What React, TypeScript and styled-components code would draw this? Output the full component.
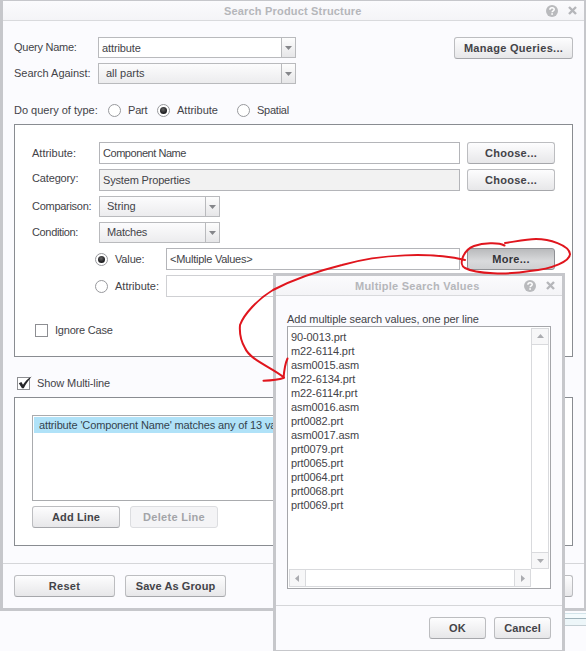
import React from 'react'
import styled, { createGlobalStyle, css } from 'styled-components'

const VALUES = [
  '90-0013.prt',
  'm22-6114.prt',
  'asm0015.asm',
  'm22-6134.prt',
  'm22-6114r.prt',
  'asm0016.asm',
  'prt0082.prt',
  'asm0017.asm',
  'prt0079.prt',
  'prt0065.prt',
  'prt0064.prt',
  'prt0068.prt',
  'prt0069.prt'
]

const GlobalStyle = createGlobalStyle`
  * {
    box-sizing: border-box;
  }
  body {
    margin: 0;
    overflow: hidden;
    background: #fbfbfe;
    color: #434348;
    font: 11px/14px 'Liberation Sans', Arial, sans-serif;
  }
`

const Page = styled.div`
  position: relative;
  width: 586px;
  height: 651px;
  overflow: hidden;
`

const Window = styled.div`
  display: flex;
  flex-direction: column;
  height: 611px;
  border: solid #c6c7cb;
  border-width: 1px 2px 3px 3px;
  background: #fbfbfe;
`

const TitleBar = styled.div`
  display: flex;
  align-items: center;
  flex: none;
  height: 20px;
  padding-right: 7px;
  border-bottom: 1px solid #d9dadd;
  background: linear-gradient(#fbfbfd, #f4f4f7);
  color: #b5b6ba;
`

const Title = styled.div<{ $indent: number; $spacing: number }>`
  flex: 1;
  padding-left: ${({ $indent }) => $indent}px;
  font-weight: bold;
  letter-spacing: ${({ $spacing }) => $spacing}px;
  white-space: nowrap;
`

const TitleIcons = styled.div`
  display: flex;
  align-items: center;
  gap: 10px;
`

const Body = styled.div`
  display: flex;
  flex-direction: column;
  flex: 1;
  padding: 16px 11px 0;
`

const Row = styled.div<{ $height?: number; $top?: number; $left?: number; $align?: string }>`
  display: flex;
  align-items: ${({ $align = 'center' }) => $align};
  flex: none;
  height: ${({ $height = 22 }) => $height}px;
  margin-top: ${({ $top = 0 }) => $top}px;
  padding-left: ${({ $left = 0 }) => $left}px;
`

const Label = styled.div<{ $width?: number; $spacing?: number; $up?: number; $down?: number }>`
  flex: none;
  width: ${({ $width }) => ($width ? `${$width}px` : 'auto')};
  padding-top: ${({ $down = 0 }) => $down}px;
  padding-bottom: ${({ $up = 0 }) => $up}px;
  letter-spacing: ${({ $spacing = 0 }) => $spacing}px;
  white-space: nowrap;
`

const Field = styled.div<{ $width: number; $spacing?: number; $readOnly?: boolean; $pale?: boolean }>`
  flex: none;
  width: ${({ $width }) => $width}px;
  height: 22px;
  padding: 3px;
  border: 1px solid ${({ $pale }) => ($pale ? '#cfd0d3' : '#b4b5b9')};
  background: ${({ $readOnly }) => ($readOnly ? '#f2f2f2' : '#fff')};
  letter-spacing: ${({ $spacing = 0 }) => $spacing}px;
  white-space: nowrap;
`

const SelectBox = styled.div<{ $width: number; $editable?: boolean }>`
  display: flex;
  flex: none;
  width: ${({ $width }) => $width}px;
  height: 21px;
  border: 1px solid #b9babd;
  background: ${({ $editable }) => ($editable ? '#fff' : 'linear-gradient(#fcfcfd, #ececee)')};
`

const SelectText = styled.div<{ $editable?: boolean; $spacing: number }>`
  flex: 1;
  padding: ${({ $editable }) => ($editable ? '3px 0 0 3px' : '2px 0 0 7px')};
  letter-spacing: ${({ $spacing }) => $spacing}px;
`

const SelectArrow = styled.div`
  display: flex;
  align-items: center;
  justify-content: center;
  width: 14px;
  border-left: 1px solid #b9babd;
  background: linear-gradient(#fdfdfd, #e6e6e8);
`

const Button = styled.div<{ $width: number; $spacing?: number; $pressed?: boolean; $disabled?: boolean }>`
  display: flex;
  align-items: center;
  justify-content: center;
  flex: none;
  width: ${({ $width }) => $width}px;
  height: 22px;
  border: 1px solid #bcbdc0;
  border-bottom-color: #a6a7ab;
  border-radius: 3px;
  background: linear-gradient(#fdfdfe, #e7e7e9);
  color: #434348;
  font-weight: bold;
  letter-spacing: ${({ $spacing = 0.3 }) => $spacing}px;
  white-space: nowrap;

  ${({ $pressed }) =>
    $pressed &&
    css`
      border-color: #8f9094;
      background: linear-gradient(#b9babc, #d9dadc 60%, #cfd0d2);
      color: #333338;
    `}

  ${({ $disabled }) =>
    $disabled &&
    css`
      border-color: #dcdde0;
      background: #f4f4f6;
      color: #a3a4a8;
    `}
`

const Circle = styled.div`
  display: flex;
  align-items: center;
  justify-content: center;
  flex: none;
  width: 13px;
  height: 13px;
  border: 1px solid #98999d;
  border-radius: 50%;
  background: #fff;
`

const Dot = styled.div`
  width: 7px;
  height: 7px;
  border-radius: 50%;
  background: radial-gradient(circle at 45% 35%, #666, #1d1d20 65%);
`

const Box = styled.div`
  flex: none;
  width: 13px;
  height: 13px;
  border: 1px solid #8d8e92;
  background: #fff;

  svg {
    display: block;
    overflow: visible;
  }
`

const Spacer = styled.div<{ $width?: number }>`
  flex: ${({ $width }) => ($width ? 'none' : 1)};
  width: ${({ $width }) => ($width ? `${$width}px` : 'auto')};
`

const Panel = styled.div<{ $height: number; $top: number }>`
  flex: none;
  height: ${({ $height }) => $height}px;
  margin-top: ${({ $top }) => $top}px;
  padding: 17px 17px 0;
  border: 1px solid #898c91;
  background: #fff;
`

const Lines = styled.div`
  height: 86px;
  padding: 1px;
  border: 1px solid #a9abae;
`

const SelectedLine = styled.div`
  height: 16px;
  padding: 1px 5px;
  background: #b0e2f8;
  color: #34434e;
  letter-spacing: -0.14px;
  white-space: nowrap;
`

const LineText = styled.div`
  width: 234px;
  overflow: hidden;
`

const Footer = styled.div<{ $gap: number; $pad: string }>`
  display: flex;
  flex: none;
  gap: ${({ $gap }) => $gap}px;
  height: 45px;
  padding: ${({ $pad }) => $pad};
  border-top: 1px solid #d5d6d9;
`

const PageStrip = styled.div`
  height: 13px;
  margin-left: 565px;
  margin-top: 2px;
  border-top: 1px solid #d3e4ea;
  border-bottom: 1px solid #c3ced3;
  background: linear-gradient(#f4fbfd 4px, #9fb3bb 4px, #9fb3bb 5px, #edf6f9 5px);
`

const Modal = styled.div`
  position: absolute;
  left: 273px;
  top: 273px;
  display: flex;
  flex-direction: column;
  width: 292px;
  height: 380px;
  border: 3px solid #c6c7cb;
  background: #fbfbfe;
`

const ModalBody = styled.div`
  flex: 1;
  padding: 16px 11px 0;
`

const TextArea = styled.div`
  display: grid;
  grid-template-columns: 1fr 18px;
  grid-template-rows: 241px 18px;
  width: 264px;
  height: 263px;
  padding: 1px;
  border: 1px solid #a5a6aa;
  background: #fff;
`

const ValueList = styled.div`
  padding: 2px;
`

const ValueLine = styled.div`
  height: 14px;
  letter-spacing: -0.1px;
`

const ScrollBar = styled.div<{ $horizontal?: boolean }>`
  display: flex;
  flex-direction: ${({ $horizontal }) => ($horizontal ? 'row' : 'column')};
  justify-content: space-between;
  border: 1px solid #d9dadd;
`

const ScrollButton = styled.div<{ $edge: string }>`
  display: flex;
  align-items: center;
  justify-content: center;
  width: 16px;
  height: 16px;
  border-${({ $edge }) => $edge}: 1px solid #d9dadd;
  background: #f7f7f8;
`

const Ink = styled.svg`
  position: absolute;
  left: 0;
  top: 0;
  pointer-events: none;
`

const Triangle = ({ rotate = 0, color = '#85868a' }: { rotate?: number; color?: string }) => (
  <svg width="7" height="7" viewBox="0 0 7 7">
    <path d="M0 2H7L3.5 6Z" fill={color} transform={`rotate(${rotate} 3.5 3.5)`} />
  </svg>
)

const HelpIcon = () => (
  <svg width="12" height="12" viewBox="0 0 12 12">
    <circle cx="6" cy="6" r="6" fill="#b9babd" />
    <path d="M3.9 4.7C3.9 2.2 8.2 2.2 8.2 4.5C8.2 5.8 6.1 5.8 6.1 7.3" fill="none" stroke="#fff" strokeWidth="1.5" />
    <rect x="5.3" y="8.2" width="1.6" height="1.6" fill="#fff" />
  </svg>
)

const CloseIcon = () => (
  <svg width="9" height="9" viewBox="0 0 9 9">
    <path d="M1 1L8 8M8 1L1 8" stroke="#b5b6ba" strokeWidth="2.4" />
  </svg>
)

const Radio = ({ checked }: { checked?: boolean }) => <Circle>{checked && <Dot />}</Circle>

const CheckBox = ({ checked }: { checked?: boolean }) => (
  <Box>
    {checked && (
      <svg width="11" height="11" viewBox="0 0 11 11">
        <path d="M0.8 5.2L3.4 4.1L5 6.8C7 3.6 9.5 0.8 13.6 -1.5C10.4 2.5 8 5.8 5.8 10.2H4Z" fill="#262629" />
      </svg>
    )}
  </Box>
)

interface SelectProps {
  width: number
  value: string
  spacing?: number
  editable?: boolean
}

const Select = ({ width, value, spacing = 0, editable }: SelectProps) => (
  <SelectBox $width={width} $editable={editable}>
    <SelectText $editable={editable} $spacing={spacing}>
      {value}
    </SelectText>
    <SelectArrow>
      <Triangle />
    </SelectArrow>
  </SelectBox>
)

function MultipleValues() {
  return (
    <Modal>
      <TitleBar>
        <Title $indent={79} $spacing={0.24}>
          Multiple Search Values
        </Title>
        <TitleIcons>
          <HelpIcon />
          <CloseIcon />
        </TitleIcons>
      </TitleBar>
      <ModalBody>
        <Label $spacing={-0.08}>Add multiple search values, one per line</Label>
        <TextArea>
          <ValueList>
            {VALUES.map(value => (
              <ValueLine key={value}>{value}</ValueLine>
            ))}
          </ValueList>
          <ScrollBar>
            <ScrollButton $edge="bottom">
              <Triangle rotate={180} color="#abacb0" />
            </ScrollButton>
            <ScrollButton $edge="top">
              <Triangle color="#abacb0" />
            </ScrollButton>
          </ScrollBar>
          <ScrollBar $horizontal>
            <ScrollButton $edge="right">
              <Triangle rotate={90} color="#abacb0" />
            </ScrollButton>
            <ScrollButton $edge="left">
              <Triangle rotate={-90} color="#abacb0" />
            </ScrollButton>
          </ScrollBar>
        </TextArea>
      </ModalBody>
      <Footer $gap={8} $pad="11px 11px 0 153px">
        <Button $width={57}>OK</Button>
        <Button $width={57} $spacing={0.1}>
          Cancel
        </Button>
      </Footer>
    </Modal>
  )
}

export default function App() {
  return (
    <Page>
      <GlobalStyle />
      <Window>
        <TitleBar>
          <Title $indent={221} $spacing={0.18}>
            Search Product Structure
          </Title>
          <TitleIcons>
            <HelpIcon />
            <CloseIcon />
          </TitleIcons>
        </TitleBar>
        <Body>
          <Row $align="flex-start">
            <Label $width={84} $spacing={-0.26} $down={3}>
              Query Name:
            </Label>
            <Select width={198} value="attribute" spacing={-0.1} editable />
            <Spacer />
            <Button $width={119}>Manage Queries...</Button>
          </Row>
          <Row $height={21} $top={4}>
            <Label $width={84} $spacing={-0.03} $up={2}>
              Search Against:
            </Label>
            <Select width={198} value="all parts" />
          </Row>
          <Row $height={14} $top={19}>
            <Label $width={94}>Do query of type:</Label>
            <Radio />
            <Spacer $width={7} />
            <Label $width={29} $spacing={-0.2}>
              Part
            </Label>
            <Radio checked />
            <Spacer $width={7} />
            <Label $width={60}>Attribute</Label>
            <Radio />
            <Spacer $width={7} />
            <Label $spacing={-0.25}>Spatial</Label>
          </Row>
          <Panel $height={233} $top={7}>
            <Row>
              <Label $width={67}>Attribute:</Label>
              <Field $width={361} $spacing={-0.45}>
                Component Name
              </Field>
              <Spacer $width={7} />
              <Button $width={88}>Choose...</Button>
            </Row>
            <Row $top={5}>
              <Label $width={67} $up={4} $spacing={-0.15}>
                Category:
              </Label>
              <Field $width={361} $spacing={-0.17} $readOnly>
                System Properties
              </Field>
              <Spacer $width={7} />
              <Button $width={88}>Choose...</Button>
            </Row>
            <Row $height={21} $top={5}>
              <Label $width={67} $up={2} $spacing={-0.28}>
                Comparison:
              </Label>
              <Select width={121} value="String" />
            </Row>
            <Row $height={21} $top={5}>
              <Label $width={67} $up={2} $spacing={-0.35}>
                Condition:
              </Label>
              <Select width={121} value="Matches" spacing={-0.2} />
            </Row>
            <Row $top={5} $left={63}>
              <Radio checked />
              <Spacer $width={7} />
              <Label $width={51} $spacing={-0.15}>
                Value:
              </Label>
              <Field $width={294} $spacing={-0.25}>
                &lt;Multiple Values&gt;
              </Field>
              <Spacer $width={7} />
              <Button $width={88} $pressed>
                More...
              </Button>
            </Row>
            <Row $top={5} $left={63}>
              <Radio />
              <Spacer $width={7} />
              <Label $width={51}>Attribute:</Label>
              <Field $width={294} $pale />
            </Row>
            <Row $height={14} $top={26} $left={3}>
              <CheckBox />
              <Spacer $width={7} />
              <Label $spacing={-0.2}>Ignore Case</Label>
            </Row>
          </Panel>
          <Row $height={14} $top={19} $left={3}>
            <CheckBox checked />
            <Spacer $width={7} />
            <Label $spacing={-0.1}>Show Multi-line</Label>
          </Row>
          <Panel $height={149} $top={7}>
            <Lines>
              <SelectedLine>
                <LineText>attribute 'Component Name' matches any of 13 va</LineText>
              </SelectedLine>
            </Lines>
            <Row $top={5}>
              <Button $width={88} $spacing={0.1}>
                Add Line
              </Button>
              <Spacer $width={10} />
              <Button $width={88} $disabled>
                Delete Line
              </Button>
            </Row>
          </Panel>
        </Body>
        <Footer $gap={10} $pad="11px 11px 0">
          <Button $width={101}>Reset</Button>
          <Button $width={101} $spacing={0.08}>
            Save As Group
          </Button>
          <Spacer />
          <Button $width={101} />
        </Footer>
      </Window>
      <PageStrip />
      <MultipleValues />
      <Ink width="586" height="651" fill="none" stroke="#e0151d" strokeWidth="2" strokeLinecap="round">
        <path d="M504.5 245.5C498 242 483 243 474 246C463 250 458 265 465 268C476 274 508 275 530 271C553 269 570 261 570 254C569 245 549 239 536 239C526 239 513 242 505 243" />
        <path d="M465 260C431 252 380 254 342 265C318 271 292 280 273 290C258 299 244 314 240 325C239 337 242 343 245 348C250 360 273 368 284 377.5" />
        <path d="M263.5 380.8C271 380.5 278 380 283.5 378C284 372 285 364 287.5 358.5" />
      </Ink>
    </Page>
  )
}
